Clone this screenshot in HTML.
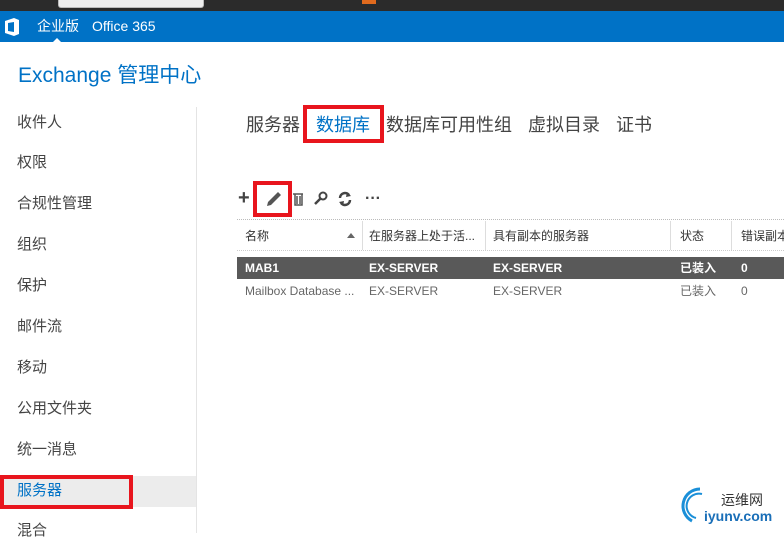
<!DOCTYPE html>
<html><head><meta charset="utf-8"><style>
*{margin:0;padding:0;box-sizing:border-box}
body{width:784px;height:533px;overflow:hidden;background:#fff;font-family:"Liberation Sans","Noto Sans CJK SC",sans-serif;position:relative}
.a{position:absolute;white-space:nowrap}
.nav{font-size:15px;color:#444;left:17px;line-height:18px}
.tab{font-size:18px;color:#444;top:111px}
.h{font-size:12px;color:#333;top:229px;line-height:14px}
.r1{font-size:12px;font-weight:bold;color:#fff;top:261px;line-height:14px}
.r2{font-size:12px;color:#666;top:284px;line-height:14px}
.vd{position:absolute;top:221px;height:29px;width:1px;background:#ddd}
</style></head><body>
<div class="a" style="left:0;top:0;width:784px;height:11px;background:#2b2b2b"></div>
<div class="a" style="left:58px;top:0;width:146px;height:8px;background:#eee;border:1px solid #bbb;border-top:none;border-radius:0 0 3px 3px"></div>
<div class="a" style="left:362px;top:0;width:14px;height:4px;background:#e06a1e"></div>
<div class="a" style="left:0;top:11px;width:784px;height:31px;background:#0072c6"></div>
<svg class="a" style="left:4px;top:18px" width="16" height="18" viewBox="0 0 16 18"><path d="M1 3 L10 0 L15 2 L15 16 L10 18 L1 15 Z M4 5 L4 13 L10 14 L10 4 Z" fill="#fff" fill-rule="evenodd"/></svg>
<div class="a" style="left:37px;top:18px;font-size:14px;color:#fff;line-height:16px">企业版</div>
<div class="a" style="left:53px;top:38px;width:0;height:0;border-left:4px solid transparent;border-right:4px solid transparent;border-bottom:4px solid #fff"></div>
<div class="a" style="left:92px;top:18px;font-size:14px;color:#fff;line-height:16px">Office 365</div>
<div class="a" style="left:18px;top:59px;font-size:21px;color:#0072c6">Exchange 管理中心</div>
<div class="a" style="left:196px;top:107px;width:1px;height:426px;background:#e4e4e4"></div>
<div class="a" style="left:0;top:476px;width:196px;height:31px;background:#ececec"></div>
<div class="a nav" style="top:114px">收件人</div>
<div class="a nav" style="top:154px">权限</div>
<div class="a nav" style="top:195px">合规性管理</div>
<div class="a nav" style="top:236px">组织</div>
<div class="a nav" style="top:277px">保护</div>
<div class="a nav" style="top:318px">邮件流</div>
<div class="a nav" style="top:359px">移动</div>
<div class="a nav" style="top:400px">公用文件夹</div>
<div class="a nav" style="top:441px">统一消息</div>
<div class="a nav" style="top:482px;color:#0072c6">服务器</div>
<div class="a nav" style="top:522px">混合</div>
<div class="a" style="left:0;top:475px;width:133px;height:34px;border:4px solid #e8151d"></div>
<div class="a tab" style="left:246px">服务器</div>
<div class="a tab" style="left:316px;color:#0072c6">数据库</div>
<div class="a tab" style="left:386px">数据库可用性组</div>
<div class="a tab" style="left:528px">虚拟目录</div>
<div class="a tab" style="left:616px">证书</div>
<div class="a" style="left:303px;top:105px;width:81px;height:38px;border:4px solid #e8151d"></div>
<div class="a" style="left:238px;top:187px;font-size:20px;color:#444;font-weight:bold">+</div>
<svg class="a" style="left:264px;top:189px" width="20" height="20" viewBox="0 0 20 20"><path d="M3 17 L4 13 L14 3 L17 6 L7 16 Z" fill="#555"/></svg>
<div class="a" style="left:253px;top:181px;width:39px;height:36px;border:4px solid #e8151d"></div>
<svg class="a" style="left:292px;top:191px" width="12" height="15" viewBox="0 0 12 15"><path d="M1 3h10M3 3v11h7V3M5 5v8M8 5v8" stroke="#555" stroke-width="1.5" fill="none"/></svg>
<svg class="a" style="left:314px;top:191px" width="14" height="14" viewBox="0 0 14 14"><circle cx="9" cy="5" r="3.5" stroke="#444" stroke-width="2" fill="none"/><path d="M6.5 7.5 L1 13" stroke="#444" stroke-width="2.5"/></svg>
<svg class="a" style="left:337px;top:191px" width="16" height="16" viewBox="0 0 16 16"><path d="M3 7 A5 5 0 0 1 12 4 M13 9 A5 5 0 0 1 4 12" stroke="#444" stroke-width="2.5" fill="none"/><path d="M10 1 L14 5 L9 6Z M6 15 L2 11 L7 10Z" fill="#444"/></svg>
<div class="a" style="left:365px;top:190px;font-size:16px;color:#444;font-weight:bold">···</div>
<div class="a" style="left:237px;top:219px;width:547px;height:1px;border-top:1px dotted #bbb"></div>
<div class="a" style="left:237px;top:250px;width:547px;height:1px;border-top:1px dotted #ccc"></div>
<div class="vd" style="left:362px"></div><div class="vd" style="left:485px"></div><div class="vd" style="left:670px"></div><div class="vd" style="left:731px"></div>
<div class="a h" style="left:245px">名称</div>
<div class="a" style="left:347px;top:233px;width:0;height:0;border-left:4px solid transparent;border-right:4px solid transparent;border-bottom:5px solid #666"></div>
<div class="a h" style="left:369px">在服务器上处于活...</div>
<div class="a h" style="left:493px">具有副本的服务器</div>
<div class="a h" style="left:680px">状态</div>
<div class="a h" style="left:741px">错误副本</div>
<div class="a" style="left:237px;top:257px;width:547px;height:22px;background:#595959"></div>
<div class="a r1" style="left:245px">MAB1</div>
<div class="a r1" style="left:369px">EX-SERVER</div>
<div class="a r1" style="left:493px">EX-SERVER</div>
<div class="a r1" style="left:680px">已装入</div>
<div class="a r1" style="left:741px">0</div>
<div class="a r2" style="left:245px">Mailbox Database ...</div>
<div class="a r2" style="left:369px">EX-SERVER</div>
<div class="a r2" style="left:493px">EX-SERVER</div>
<div class="a r2" style="left:680px">已装入</div>
<div class="a r2" style="left:741px">0</div>
<svg class="a" style="left:678px;top:485px" width="40" height="40" viewBox="0 0 40 40"><path d="M22 4 A17 17 0 0 0 14 36" stroke="#1a8fd8" stroke-width="3" fill="none"/><path d="M24 9 A12 12 0 0 0 18 33" stroke="#1a8fd8" stroke-width="2" fill="none"/></svg>
<div class="a" style="left:721px;top:490px;font-size:14px;color:#333">运维网</div>
<div class="a" style="left:704px;top:508px;font-size:14px;font-weight:bold;color:#1a6fb8">iyunv.com</div>
</body></html>
